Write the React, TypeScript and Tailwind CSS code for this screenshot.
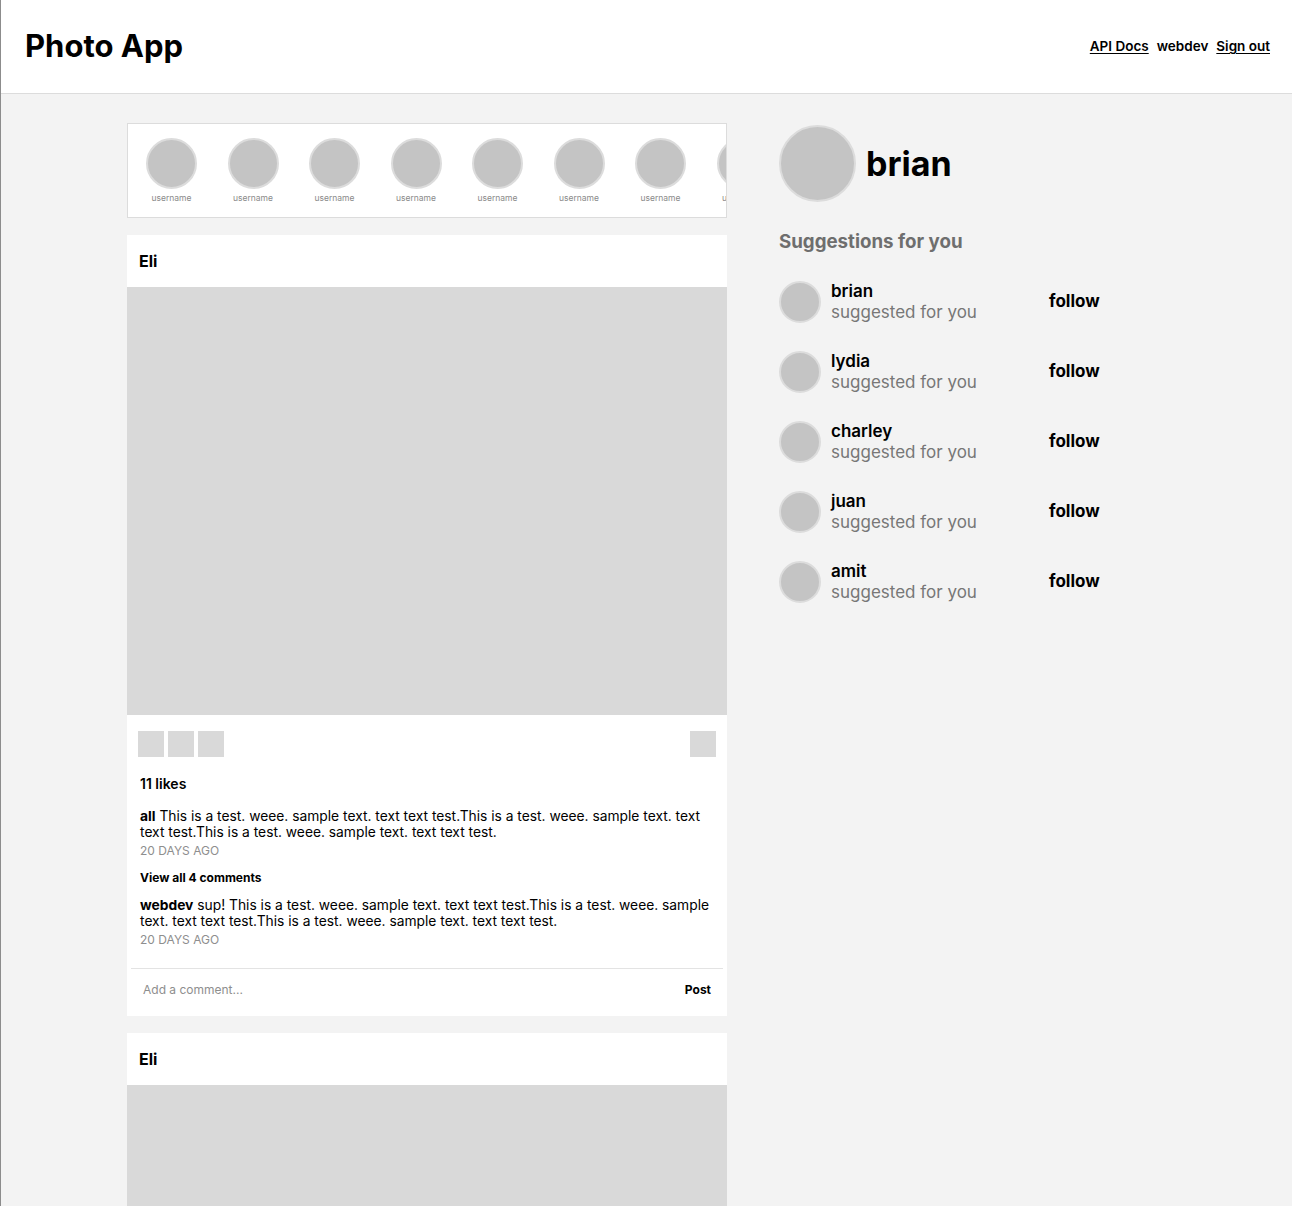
const stories = Array.from({ length: 8 }, (_, i) => i);

const suggestions = ["brian", "lydia", "charley", "juan", "amit"];

const caption =
  "This is a test. weee. sample text. text text test.This is a test. weee. sample text. text text test.This is a test. weee. sample text. text text test.";

function Post({ full = true }: { full?: boolean }) {
  return (
    <div className="bg-white">
      <div className="flex h-[52px] items-center px-3">
        <span className="text-[16px] font-bold text-black">Eli</span>
      </div>
      <div className="h-[428px] bg-[#d9d9d9]" />
      {full && (
        <>
          <div className="flex items-center justify-between px-[11px] pt-4">
            <div className="flex gap-1">
              <div className="h-[26px] w-[26px] bg-[#d9d9d9]" />
              <div className="h-[26px] w-[26px] bg-[#d9d9d9]" />
              <div className="h-[26px] w-[26px] bg-[#d9d9d9]" />
            </div>
            <div className="h-[26px] w-[26px] bg-[#d9d9d9]" />
          </div>
          <div className="px-[13px] pt-[19px] text-black">
            <p className="text-[14px] font-semibold leading-4">11 likes</p>
            <p className="mt-4 text-[13.8px] leading-4">
              <b className="font-bold">all</b> {caption}
            </p>
            <p className="mt-[3px] text-[12px] leading-4 text-[#8e8e8e]">20 DAYS AGO</p>
            <p className="mt-[11px] text-[12px] font-bold leading-4">
              View all 4 comments
            </p>
            <p className="mt-[11px] text-[13.8px] leading-4">
              <b className="font-bold">webdev</b> sup! {caption}
            </p>
            <p className="mt-[3px] text-[12px] leading-4 text-[#8e8e8e]">20 DAYS AGO</p>
          </div>
          <div className="mx-1 mt-[20px] border-t border-[#e3e3e3]" />
          <div className="flex h-[47px] items-center justify-between px-4 pb-[6px]">
            <span className="text-[12px] text-[#8e8e8e]">Add a comment...</span>
            <span className="text-[12px] font-bold text-black">Post</span>
          </div>
        </>
      )}
    </div>
  );
}

export default function App() {
  return (
    <div
      className="h-[1206px] overflow-hidden border-l border-[#8c8c8c] bg-[#f3f3f3]"
      style={{ fontFamily: "Inter, 'Liberation Sans', sans-serif" }}
    >
      <header className="flex h-[94px] items-center justify-between border-b border-[#dcdcdc] bg-white pl-6 pr-[22px]">
        <h1 className="pb-[1px] text-[31px] font-bold text-black">Photo App</h1>
        <nav className="flex items-center gap-2 text-[13.5px] font-semibold text-black">
          <a className="underline underline-offset-2">API Docs</a>
          <span>webdev</span>
          <a className="underline underline-offset-2">Sign out</a>
        </nav>
      </header>

      <div className="flex gap-[52px] pl-[126px] pt-[29px]">
        <main className="flex w-[600px] flex-col gap-[17px]">
          <div className="flex h-[95px] gap-[30.5px] overflow-hidden border border-[#dcdcdc] bg-white pl-[18px] pt-[14px]">
            {stories.map((i) => (
              <div key={i} className="flex w-[51px] shrink-0 flex-col items-center">
                <div className="h-[51px] w-[51px] rounded-full border-2 border-[#dcdcdc] bg-[#c4c4c4]" />
                <span className="mt-[3px] text-[8.5px] text-[#8a8a8a]">username</span>
              </div>
            ))}
          </div>
          <Post />
          <Post />
        </main>

        <aside className="w-[360px] pt-[2px]">
          <div className="flex items-center gap-[10px]">
            <div className="h-[77px] w-[77px] rounded-full border-2 border-[#dcdcdc] bg-[#c4c4c4]" />
            <span className="text-[34px] font-bold text-black">brian</span>
          </div>
          <h2 className="mt-[26px] text-[18.7px] font-bold text-[#6e6e6e]">
            Suggestions for you
          </h2>
          <div className="mt-[25px] flex flex-col gap-[28px]">
            {suggestions.map((name) => (
              <div key={name} className="flex items-center">
                <div className="h-[42px] w-[42px] shrink-0 rounded-full border-2 border-[#dcdcdc] bg-[#c4c4c4]" />
                <div className="ml-[10px] w-[218px] leading-[21px]">
                  <p className="text-[17px] font-semibold text-black">{name}</p>
                  <p className="text-[17px] text-[#777777]">suggested for you</p>
                </div>
                <span className="text-[17px] font-bold text-black">follow</span>
              </div>
            ))}
          </div>
        </aside>
      </div>
    </div>
  );
}
